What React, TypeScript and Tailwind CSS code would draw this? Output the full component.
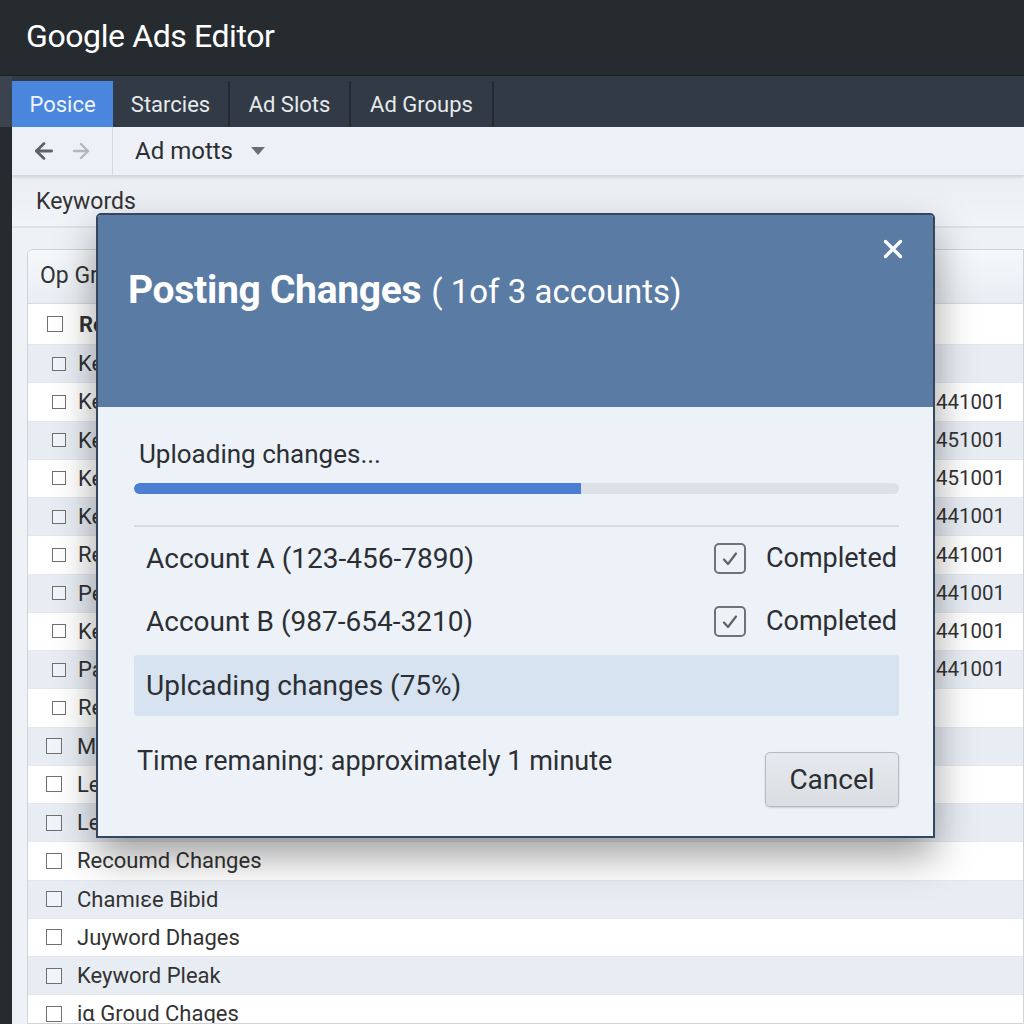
import React from "react";
import { ArrowLeft, ArrowRight, X } from "lucide-react";

type Row = { label: string; num?: string; big?: boolean; bold?: boolean };

const rows: Row[] = [
  { label: "Keyword Changes" },
  { label: "Keyword Updates", num: "441001" },
  { label: "Keyword Bids", num: "451001" },
  { label: "Keyword Status", num: "451001" },
  { label: "Keyword Match", num: "441001" },
  { label: "Removed Keywords", num: "441001" },
  { label: "Pending Changes", num: "441001" },
  { label: "Keyword Changes", num: "441001" },
  { label: "Paused Keywords", num: "441001" },
  { label: "Removed Changes" },
  { label: "Match Types", big: true },
  { label: "Level Changes", big: true },
  { label: "Level Bids", big: true },
  { label: "Recoumd Changes", big: true },
  { label: "Chamıεe Bibid", big: true },
  { label: "Juyword Dhages", big: true },
  { label: "Keyword Pleak", big: true },
  { label: "iα Groud Chages", big: true },
];

function Box({ big }: { big?: boolean }) {
  return (
    <div
      className={
        big
          ? "w-[16px] h-[16px] border-[1.5px] border-[#707070] bg-white/40 shrink-0"
          : "w-[14px] h-[14px] border-[1.5px] border-[#707070] bg-white/40 shrink-0"
      }
    />
  );
}

function CheckBox() {
  return (
    <div className="w-[32px] h-[31px] rounded-[5px] border-2 border-[#6f7378] flex items-center justify-center bg-[#eef2f7]">
      <svg width="20" height="20" viewBox="0 0 20 20">
        <path d="M4 10.5 L8 15 L16 4.5" fill="none" stroke="#5f6368" strokeWidth="2.2" strokeLinecap="round" strokeLinejoin="round" />
      </svg>
    </div>
  );
}

export default function App() {
  return (
    <div
      className="relative w-[1024px] h-[1024px] overflow-hidden bg-[#262b30] text-[#2b2f33]"
      style={{ fontFamily: "Roboto, 'Liberation Sans', sans-serif" }}
    >
      {/* Title bar */}
      <div className="h-[76px] flex items-center pl-[26px] bg-[#262b30] border-b border-[#1c2025]">
        <span className="text-white text-[32px] tracking-[-0.4px] leading-none mt-[-4px]">Google Ads Editor</span>
      </div>

      {/* Tab bar */}
      <div className="h-[51px] flex items-end bg-[#313a45]">
        <div className="w-[12px] h-full bg-[#3a434e]" />
        <div className="flex h-[46px]">
          <div className="w-[101px] bg-[#4a86de] flex items-center justify-center text-[22px] text-[#eef4fd]">Posice</div>
          <div className="w-[117px] flex items-center justify-center text-[22px] text-[#e6e9ec] border-r-2 border-[#242a31]">Starcies</div>
          <div className="w-[121px] flex items-center justify-center text-[22px] text-[#e6e9ec] border-r-2 border-[#242a31]">Ad Slots</div>
          <div className="w-[143px] flex items-center justify-center text-[22px] text-[#e6e9ec] border-r-2 border-[#242a31]">Ad Groups</div>
        </div>
      </div>

      {/* Body */}
      <div className="flex h-[897px]">
        <div className="w-[12px] bg-[#262b30] shrink-0" />
        <div className="flex-1 bg-[#eef2f7] flex flex-col">
          {/* Toolbar */}
          <div className="h-[48px] flex items-center bg-[#edf1f7] shadow-[0_2px_3px_rgba(0,0,0,0.12)] relative z-[1]">
            <div className="w-[101px] h-full flex items-center pl-[19px] gap-[12px] border-r border-[#d5dae1]">
              <ArrowLeft size={26} strokeWidth={2.6} color="#5f6368" />
              <ArrowRight size={24} strokeWidth={2.4} color="#b4b8bd" />
            </div>
            <div className="flex items-center pl-[22px] gap-[18px] h-full">
              <span className="text-[24px]">Ad motts</span>
              <svg width="14" height="9" viewBox="0 0 14 9">
                <path d="M0 0 L14 0 L7 8 Z" fill="#6b6f74" />
              </svg>
            </div>
          </div>

          {/* Keywords */}
          <div className="h-[53px] flex items-center pl-[24px] border-b-2 border-[#dfe3e8] bg-gradient-to-b from-[#eaeef3] to-[#f1f4f8]">
            <span className="text-[23px] text-[#333] mt-[4px]">Keywords</span>
          </div>

          {/* Table panel */}
          <div className="mt-[21px] ml-[15px] border border-[#cfd4db] rounded-tl-[6px] bg-white overflow-hidden flex-1">
            <div className="h-[54px] flex items-center pl-[12px] border-b border-[#d6dbe1] bg-gradient-to-b from-[#f6f8fb] to-[#e9edf2]">
              <span className="text-[23px] text-[#333]">Op Group</span>
            </div>
            <div className="h-[41px] flex items-center bg-white border-b border-[#e4e8ed]">
              <div className="pl-[19px] flex items-center gap-[16px]">
                <Box big />
                <span className="text-[22px] font-bold text-[#333]">Recommended Changes</span>
              </div>
            </div>
            {rows.map((r, i) => (
              <div
                key={i}
                className={
                  (i % 2 === 0 ? "bg-[#e8edf4]" : "bg-white") +
                  " h-[38.25px] grid grid-cols-[908px_1fr] items-center border-b border-[#e4e8ed]"
                }
              >
                <div className={r.big ? "pl-[18px] flex items-center gap-[15px]" : "pl-[24px] flex items-center gap-[12px]"}>
                  <Box big={r.big} />
                  <span className="text-[22px] text-[#333] whitespace-nowrap">{r.label}</span>
                </div>
                <span className="text-[20.5px] text-[#333]">{r.num ?? ""}</span>
              </div>
            ))}
          </div>
        </div>
      </div>

      {/* Modal */}
      <div className="absolute left-[96px] top-[213px] w-[839px] h-[625px] border-2 border-[#34475f] rounded-t-[5px] bg-[#edf2f8] shadow-[0_18px_40px_rgba(0,0,0,0.38)] flex flex-col overflow-hidden">
        <div className="h-[192px] bg-[#5a7ba3] relative shrink-0">
          <div className="pt-[54px] pl-[30px] flex items-baseline gap-[10px]">
            <span className="text-[39px] font-bold text-white leading-[42px] tracking-[-0.3px]">Posting Changes</span>
            <span className="text-[33px] text-white leading-[42px]">( 1of 3 accounts)</span>
          </div>
          <X size={30} strokeWidth={2.6} color="#ffffff" className="absolute top-[19px] right-[25px]" />
        </div>
        <div className="pl-[36px] pr-[34px] pt-[32px] flex flex-col">
          <span className="ml-[5px] text-[26px] leading-[30px]">Uploading changes...</span>
          <div className="mt-[14px] h-[11px] rounded-full bg-[#dce1e8] overflow-hidden">
            <div className="h-full bg-[#4a7fd4] rounded-l-full" style={{ width: "58.4%" }} />
          </div>
          <div className="mt-[31px] h-[2px] bg-[#d6dbe1]" />
          <div className="h-[63px] flex items-center justify-between pl-[12px] pr-[2px]">
            <span className="text-[28px]">Account A (123-456-7890)</span>
            <div className="flex items-center gap-[20px]">
              <CheckBox />
              <span className="text-[27px]">Completed</span>
            </div>
          </div>
          <div className="h-[63px] flex items-center justify-between pl-[12px] pr-[2px]">
            <span className="text-[28px]">Account B (987-654-3210)</span>
            <div className="flex items-center gap-[20px]">
              <CheckBox />
              <span className="text-[27px]">Completed</span>
            </div>
          </div>
          <div className="mt-[2px] h-[61px] flex items-center pl-[12px] bg-[#d7e3f0] rounded-[3px]">
            <span className="text-[28px]">Uplcading changes (75%)</span>
          </div>
          <div className="mt-[30px] flex justify-between items-start">
            <span className="ml-[3px] text-[27px] leading-[30px]">Time remaning: approximately 1 minute</span>
            <button className="mt-[6px] w-[134px] h-[55px] rounded-[5px] border border-[#b6bbc2] bg-gradient-to-b from-[#e6e9ed] to-[#dadee3] text-[28px] text-[#2b2f33] shadow-[0_1px_2px_rgba(0,0,0,0.15)]">
              Cancel
            </button>
          </div>
        </div>
      </div>
    </div>
  );
}
